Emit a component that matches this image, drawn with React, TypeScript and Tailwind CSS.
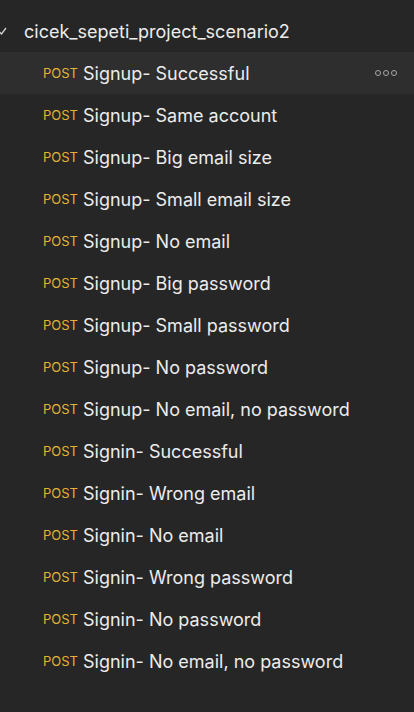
const requests = [
  "Signup- Successful",
  "Signup- Same account",
  "Signup- Big email size",
  "Signup- Small email size",
  "Signup- No email",
  "Signup- Big password",
  "Signup- Small password",
  "Signup- No password",
  "Signup- No email, no password",
  "Signin- Successful",
  "Signin- Wrong email",
  "Signin- No email",
  "Signin- Wrong password",
  "Signin- No password",
  "Signin- No email, no password",
];

export default function App() {
  return (
    <div className="w-[414px] h-[712px] overflow-hidden bg-[#262626] font-['Inter',sans-serif] text-[#ececec]">
      <div className="h-[42px] mt-[10px] flex items-center">
        <svg width="10" height="10" viewBox="0 0 10 10" className="ml-[-2px] mr-[16px]">
          <path d="M1 5.5 L3.5 8 L8 2" stroke="#d0d0d0" strokeWidth="1.3" fill="none" />
        </svg>
        <span className="text-[18px]">cicek_sepeti_project_scenario2</span>
      </div>
      {requests.map((name, i) => (
        <div
          key={name}
          className={`h-[42px] flex items-center pl-[43px] pr-[17px] ${i === 0 ? "bg-[#2e2e2e]" : ""}`}
        >
          <span className="text-[13px] text-[#e5b332] mr-[5px] mt-[1px]">POST</span>
          <span className="text-[18px] flex-1">{name}</span>
          {i === 0 && (
            <span className="flex gap-[2px]">
              {[0, 1, 2].map((d) => (
                <span key={d} className="w-[6px] h-[6px] rounded-full border-[1.5px] border-[#a8a8a8]" />
              ))}
            </span>
          )}
        </div>
      ))}
    </div>
  );
}
